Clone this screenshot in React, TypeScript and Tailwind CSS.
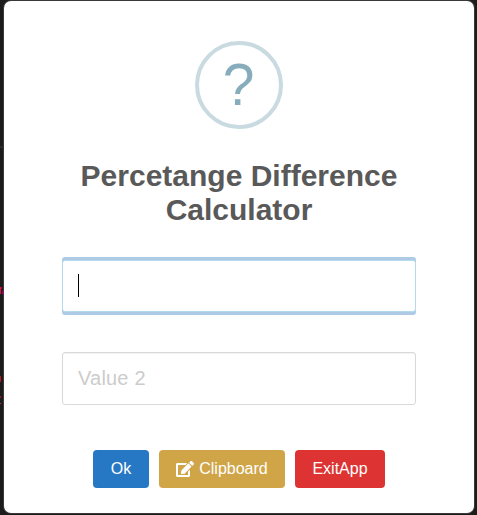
import { FaEdit } from "react-icons/fa";

export default function App() {
  return (
    <div className="relative h-[515px] w-[477px] overflow-hidden bg-[#1c1c1c] pt-px pl-1 font-['Liberation_Sans',Arial,sans-serif]">
      <div className="absolute top-[287px] left-0 h-[7px] w-px bg-[#e0103c]" />
      <div className="absolute top-[287px] left-px h-[2px] w-px bg-[#a80a50]" />
      <div className="absolute top-[291px] left-[2px] h-[3px] w-[2px] bg-[#860b66]" />
      <div className="absolute top-[376px] left-0 h-[6px] w-px bg-[#b71922]" />
      <div className="absolute top-[396px] left-0 h-[2px] w-px bg-[#a11822]" />
      <div className="absolute top-[403px] left-0 h-px w-px bg-[#e31b35]" />
      <div className="absolute top-[146px] left-0 h-[2px] w-1 bg-[#2b2b2b]" />
      <main className="flex h-[512px] w-[470px] flex-col items-center rounded-[7px] bg-white pt-10 shadow-[0_0_0_1px_#393939]">
        <div className="flex size-[88px] shrink-0 items-center justify-center rounded-full border-4 border-[#c9dae1] text-[60px] leading-[80px] text-[#87adbd]">
          <span className="scale-x-[0.95]">?</span>
        </div>
        <h2 className="mt-[30px] w-[354px] text-center text-[30px] leading-[34px] font-bold text-[#595959]">
          Percetange Difference Calculator
        </h2>
        <div className="mt-[30px] flex h-[58px] w-[354px] shrink-0 items-center overflow-hidden rounded-[3px] bg-[#aecae5]">
          <div className="flex h-[52px] w-[354px] items-center rounded-[3px] border border-[#b4dbed] bg-white pb-[2px] pl-[15px]">
            <div className="h-[23px] w-px bg-black" />
          </div>
        </div>
        <input
          className="mt-[37px] h-[53px] w-[354px] shrink-0 rounded-[3px] border border-[#d9d9d9] px-[15px] text-[20px] tracking-[0.2px] shadow-[inset_0_1px_1px_rgba(0,0,0,0.06)] outline-none placeholder:text-[#cccccc]"
          placeholder="Value 2"
        />
        <div className="mt-[45px] flex gap-[10px] text-base leading-[38px] text-white">
          <button className="h-[38px] w-[56px] rounded-[4px] bg-[#2778c4]">Ok</button>
          <button className="flex h-[38px] w-[126px] items-center justify-center gap-[5px] rounded-[4px] bg-[#d0a548]">
            <FaEdit className="h-4 w-[18px]" />
            <span>Clipboard</span>
          </button>
          <button className="h-[38px] w-[90px] rounded-[4px] bg-[#dd3333]">ExitApp</button>
        </div>
      </main>
    </div>
  );
}
